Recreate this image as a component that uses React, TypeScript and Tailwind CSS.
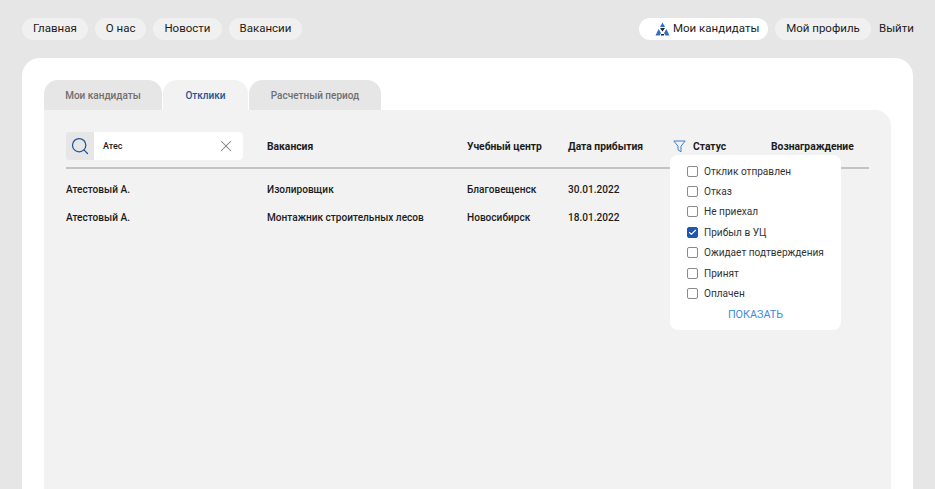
import React from 'react';
import { Check, Search, X } from 'lucide-react';

const leftLinks = ['Главная', 'О нас', 'Новости', 'Вакансии'];

const statuses = [
  { label: 'Отклик отправлен', checked: false },
  { label: 'Отказ', checked: false },
  { label: 'Не приехал', checked: false },
  { label: 'Прибыл в УЦ', checked: true },
  { label: 'Ожидает подтверждения', checked: false },
  { label: 'Принят', checked: false },
  { label: 'Оплачен', checked: false },
];

const rows = [
  { name: 'Атестовый А.', job: 'Изолировщик', center: 'Благовещенск', date: '30.01.2022' },
  { name: 'Атестовый А.', job: 'Монтажник строительных лесов', center: 'Новосибирск', date: '18.01.2022' },
];

const Logo = () => (
  <svg width="15" height="14" viewBox="0 0 15 14">
    <path d="M7.5 0.5 L10 5 H5 Z" fill="#2f6fc4" />
    <path d="M3.6 7 L6 11 L4.6 13.5 H0.5 Z" fill="#2f6fc4" />
    <path d="M11.4 7 L14.5 13.5 H10.4 L9 11 Z" fill="#2f6fc4" />
    <path d="M5 6 H10 L7.5 9.5 Z" fill="#1f2430" />
    <path d="M6 12 H9 V13.5 H6 Z" fill="#1f2430" />
  </svg>
);

const App = () => {
  return (
    <div className="h-screen overflow-hidden bg-[#e6e6e6] flex flex-col font-['Roboto',sans-serif] text-[#1c1c1c]">
      <nav className="h-[58px] shrink-0 px-[22px] pt-[18px] flex items-start justify-between text-[11.5px]">
        <div className="flex gap-[7px]">
          {leftLinks.map((link) => (
            <a key={link} className="h-[22px] px-[11px] rounded-full bg-[#f0f0f0] flex items-center">
              {link}
            </a>
          ))}
        </div>
        <div className="flex items-center gap-[7px]">
          <a className="h-[22px] w-[129px] rounded-full bg-white flex items-center pl-[16px] gap-[3px]">
            <Logo />
            Мои кандидаты
          </a>
          <a className="h-[22px] w-[96px] rounded-full bg-[#f0f0f0] flex items-center justify-center">Мой профиль</a>
          <a className="ml-[1px] w-[34px] text-right whitespace-nowrap">Выйти</a>
        </div>
      </nav>

      <main className="flex-1 mx-[22px] bg-white rounded-t-[18px] pt-[22px] px-[22px] flex flex-col min-h-0">
        <div className="flex gap-[1px] h-[30px] shrink-0 text-[10px] font-medium">
          <button className="w-[118px] rounded-t-[14px] bg-[#e6e6e6] text-[#6f6f6f]">Мои кандидаты</button>
          <button className="w-[85px] rounded-t-[14px] bg-[#f2f2f2] text-[#1f5596]">Отклики</button>
          <button className="w-[132px] rounded-t-[14px] bg-[#e6e6e6] text-[#6f6f6f]">Расчетный период</button>
        </div>

        <section className="relative flex-1 bg-[#f2f2f2] rounded-tr-[16px] pt-[22px] px-[22px] text-[10.1px] font-medium">
          <div className="grid grid-cols-[201px_200px_101px_105px_98px_1fr] items-center h-[28px] font-bold text-[10.3px]">
            <div className="flex h-[28px] w-[177px] font-medium">
              <div className="w-[28px] bg-[#e6e6e6] rounded-l-[3px] flex items-center justify-center">
                <Search size={20} strokeWidth={1.5} className="text-[#1f5596]" />
              </div>
              <div className="flex-1 bg-white rounded-r-[4px] flex items-center justify-between pl-[9px] pr-[8px] text-[9px]">
                <span className="pt-[1px]">Атес</span>
                <X size={18} strokeWidth={1.4} className="text-[#808080]" />
              </div>
            </div>
            <span className="pt-[1px]">Вакансия</span>
            <span className="pt-[1px]">Учебный центр</span>
            <span className="pt-[1px]">Дата прибытия</span>
            <span className="flex items-center gap-[7px]">
              <svg width="13" height="13" viewBox="0 0 13 13" fill="none" stroke="#3d7fc9" strokeWidth="1">
                <path d="M0.8 1 H12.2 L8 6.2 V11.8 L5 9.8 V6.2 Z" strokeLinejoin="round" />
              </svg>
              <span className="pt-[1px]">Статус</span>
            </span>
            <span className="pt-[1px]">Вознаграждение</span>
          </div>

          <div className="h-[2px] bg-[#c4c4c4] mt-[7px] mb-[7px]" />

          {rows.map((row) => (
            <div key={row.job} className="grid grid-cols-[201px_200px_101px_105px] items-center h-[28px]">
              <span>{row.name}</span>
              <span>{row.job}</span>
              <span>{row.center}</span>
              <span>{row.date}</span>
            </div>
          ))}

          <div className="absolute left-[626px] top-[45px] w-[171px] h-[175px] bg-white rounded-[8px] pt-[6px] pl-[17px] text-[10.1px] font-normal text-[#333333]">
            {statuses.map((status) => (
              <label key={status.label} className="flex items-center gap-[6px] h-[20.4px] whitespace-nowrap">
                {status.checked ? (
                  <span className="w-[9px] h-[9px] box-content rounded-[2px] border-[1px] border-[#1f56b0] bg-[#1f56b0] flex items-center justify-center">
                    <Check size={9} strokeWidth={3} className="text-white" />
                  </span>
                ) : (
                  <span className="w-[9px] h-[9px] box-content rounded-[2px] border-[1px] border-[#8a8a8a]" />
                )}
                {status.label}
              </label>
            ))}
            <div className="-ml-[17px] text-center text-[10.8px] text-[#3d8bdc] mt-[3px]">ПОКАЗАТЬ</div>
          </div>
        </section>
      </main>
    </div>
  );
};

export default App;
